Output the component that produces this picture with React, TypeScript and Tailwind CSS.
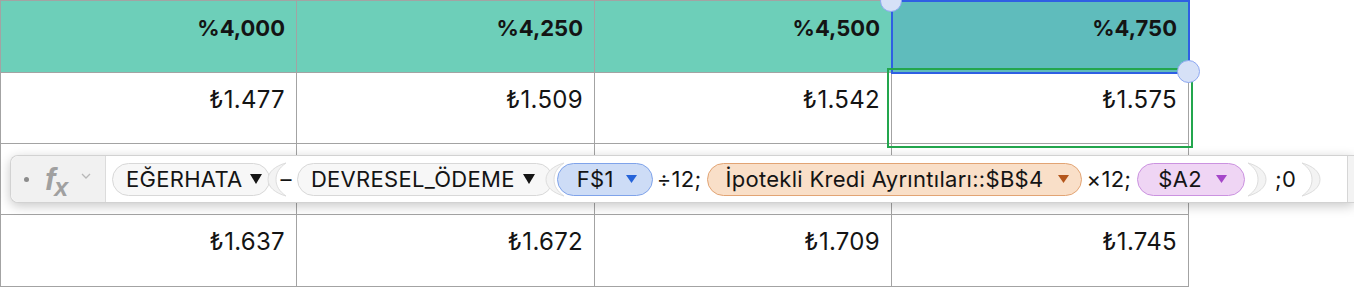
import React from "react";

const HEADERS = ["%4,000", "%4,250", "%4,500", "%4,750"];
const ROWS = [
  ["₺1.477", "₺1.509", "₺1.542", "₺1.575"],
  ["₺1.556", "₺1.590", "₺1.625", "₺1.659"],
  ["₺1.637", "₺1.672", "₺1.709", "₺1.745"],
];
const COL_W = ["w-[296px]", "w-[298px]", "w-[297px]", "w-[297px]"];
const ROW_H = ["h-[71px]", "h-[71px]", "h-[72px]"];

type Tone = "fn" | "blue" | "orange" | "purple";

const TONES: Record<Tone, { box: string; tri: string }> = {
  fn: { box: "bg-[#f7f7f7] border-[#d8d8d8]", tri: "#151515" },
  blue: { box: "bg-[#cddcf6] border-[#7fa3ea]", tri: "#2563d9" },
  orange: { box: "bg-[#f9dfc8] border-[#e2a474]", tri: "#b4561b" },
  purple: { box: "bg-[#efd5f4] border-[#cb92e0]", tri: "#a546c9" },
};

function Triangle({ color, big }: { color: string; big?: boolean }) {
  const w = big ? 12 : 11;
  const h = big ? 10 : 8;
  return (
    <svg width={w} height={h} viewBox={`0 0 ${w} ${h}`} className="shrink-0">
      <path d={`M0 0 L${w} 0 L${w / 2} ${h} Z`} fill={color} />
    </svg>
  );
}

function Pill({ label, tone, gap, className }: { label: string; tone: Tone; gap: string; className: string }) {
  const t = TONES[tone];
  return (
    <div className={`h-[33px] rounded-full border-[1.5px] flex items-center shrink-0 whitespace-nowrap ${t.box} ${className}`}>
      {label}
      <span className={gap}>
        <Triangle color={t.tri} big={tone === "fn"} />
      </span>
    </div>
  );
}

// light grey bracket crescent, ")" or "("
function Paren({ open, className }: { open?: boolean; className: string }) {
  return (
    <svg width="22" height="35" viewBox="0 0 22 35" className={`shrink-0 ${open ? "-scale-x-100" : ""} ${className}`}>
      <path
        d="M2 1 C13 4 20 10 20 17.5 C20 25 13 31 2 34 C9 29 12 24 12 17.5 C12 11 9 6 2 1 Z"
        fill="#f3f3f3"
        stroke="#dddddd"
        strokeWidth="1"
      />
    </svg>
  );
}

export default function App() {
  return (
    <div className="relative w-[1354px] h-[287px] bg-white overflow-hidden text-[#141414] font-['Inter','DejaVu_Sans',sans-serif]">
      {/* table */}
      <div className="w-[1189px] border-l border-t border-[#a3a3a3]">
        <div className="flex h-[72px]">
          {HEADERS.map((h, i) => (
            <div
              key={h}
              className={`${COL_W[i]} h-full flex justify-end pr-[11px] pt-[13px] border-r border-b border-[#a3a3a3] text-[22px] leading-[28px] font-bold ${i === 3 ? "bg-[#5fbcbc]" : "bg-[#6dcfb9]"}`}
            >
              {h}
            </div>
          ))}
        </div>
        {ROWS.map((row, r) => (
          <div key={r} className={`flex ${ROW_H[r]}`}>
            {row.map((v, i) => (
              <div
                key={i}
                className={`${COL_W[i]} h-full flex justify-end pr-[11px] pt-[13px] border-r border-b border-[#a3a3a3] text-[24px] leading-[28px] tracking-[0.3px]`}
              >
                {v}
              </div>
            ))}
          </div>
        ))}
      </div>

      {/* selection */}
      <div className="absolute left-[891px] top-0 w-[299px] h-[74px] border-2 border-[#2f5fe3]" />
      <div className="absolute left-[887px] top-[68px] w-[306px] h-[80px] border-2 border-[#23a64d]" />
      <div className="absolute left-[880px] top-[-10px] w-[22px] h-[22px] rounded-full bg-[#d6e1f7] border-[1.5px] border-[#8ea8f2]" />
      <div className="absolute left-[1177px] top-[60px] w-[23px] h-[23px] rounded-full bg-[#d6e1f7] border-[1.5px] border-[#8ea8f2]" />

      {/* formula editor */}
      <div className="absolute left-[10px] top-[155px] right-0 h-[48px] flex bg-white border border-r-0 border-[#d2d2d2] rounded-l-[8px] shadow-[0_3px_12px_rgba(0,0,0,0.22)]">
        <div className="w-[95px] h-full flex items-center bg-[#f1f1f1] border-r border-[#dcdcdc] rounded-l-[8px]">
          <span className="ml-[13px] w-[5px] h-[5px] rounded-full bg-[#8c8c8c]" />
          <span className="ml-[16px] text-[#a0a0a0] font-bold italic leading-none font-['Liberation_Sans',sans-serif] flex items-end">
            <span className="text-[31px]">f</span>
            <span className="text-[25px] relative top-[5px] -ml-[1px]">x</span>
          </span>
          <svg width="10" height="6" viewBox="0 0 10 6" className="ml-[13px] mb-[6px]">
            <path d="M1 1 L5 5 L9 1" fill="none" stroke="#b8b8b8" strokeWidth="1.3" />
          </svg>
        </div>

        <div className="flex-1 flex items-center pl-[6px] text-[22px] tracking-[0.3px] whitespace-nowrap">
          <Pill label="EĞERHATA" tone="fn" gap="ml-[7px]" className="pl-[13px] pr-[7px]" />
          <Paren open className="-ml-[4px]" />
          <span className="-ml-[7px]">–</span>
          <Pill label="DEVRESEL_ÖDEME" tone="fn" gap="ml-[8px]" className="ml-[5px] pl-[13px] pr-[17px]" />
          <Paren open className="-ml-[9px]" />
          <Pill label="F$1" tone="blue" gap="ml-[12px]" className="-ml-[9px] pl-[19px] pr-[15px]" />
          <span className="ml-[4px]">÷12;</span>
          <Pill label="İpotekli Kredi Ayrıntıları::$B$4" tone="orange" gap="ml-[14px]" className="ml-[6px] pl-[17px] pr-[12px]" />
          <span className="ml-[5px]">×12;</span>
          <Pill label="$A2" tone="purple" gap="ml-[14px]" className="ml-[6px] pl-[20px] pr-[17px]" />
          <Paren className="ml-[1px]" />
          <span className="ml-[7px]">;0</span>
          <Paren className="ml-[4px]" />
        </div>
        <div className="w-[7px] h-full border-l border-[#d6d6d6] bg-[#f3f3f3]" />
      </div>
    </div>
  );
}
